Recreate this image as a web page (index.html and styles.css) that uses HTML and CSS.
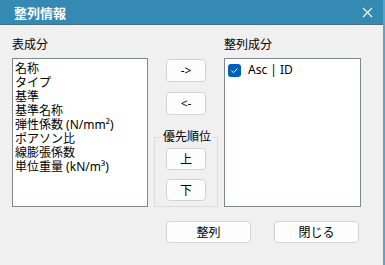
FILE: index.html
```html
<!DOCTYPE html>
<html lang="ja">
<head>
<meta charset="utf-8">
<link rel="stylesheet" href="styles.css">
</head>
<body>
<div class="window">
  <div class="titlebar">
    <span class="title">整列情報</span>
    <svg class="close" width="11" height="11" viewBox="0 0 11 11"><path d="M1 1L10 10M10 1L1 10" stroke="#fff" stroke-width="1.2" fill="none"/></svg>
  </div>
  <div class="main">
    <div class="panel left">
      <div class="label">表成分</div>
      <div class="listbox">
        <div class="item">名称</div>
        <div class="item">タイプ</div>
        <div class="item">基準</div>
        <div class="item">基準名称</div>
        <div class="item">弾性係数 (N/mm²)</div>
        <div class="item">ポアソン比</div>
        <div class="item">線膨張係数</div>
        <div class="item">単位重量 (kN/m³)</div>
      </div>
    </div>
    <div class="middle">
      <button class="btn small">-&gt;</button>
      <button class="btn small second">&lt;-</button>
      <fieldset class="group">
        <legend>優先順位</legend>
        <button class="btn small">上</button>
        <button class="btn small">下</button>
      </fieldset>
    </div>
    <div class="panel right">
      <div class="label">整列成分</div>
      <div class="listbox">
        <div class="check-item">
          <span class="checkbox"><svg width="13" height="13" viewBox="0 0 13 13"><path d="M3.5 6.8L5.5 8.6L9.5 4.6" stroke="#fff" stroke-width="1" fill="none"/></svg></span>
          <span class="check-text">Asc | ID</span>
        </div>
      </div>
    </div>
  </div>
  <div class="actions">
    <button class="btn wide">整列</button>
    <button class="btn wide">閉じる</button>
  </div>
</div>
</body>
</html>
```
FILE: styles.css
```css
html, body {
  margin: 0;
  padding: 0;
}
body {
  width: 385px;
  height: 265px;
  overflow: hidden;
  font-family: "Noto Sans", "Noto Sans CJK JP", sans-serif;
  font-size: 12px;
  color: #000;
  background: #f0f0f0;
}
.window {
  width: 383px;
  height: 265px;
  background: #f0f0f0;
  border-right: 2px solid #5aa3cc;
}
.titlebar {
  height: 24px;
  background: #348ab3;
  border-bottom: 1px solid #4f6e80;
  display: flex;
  align-items: center;
  justify-content: space-between;
  padding: 0 10px 0 14px;
}
.title {
  color: #fff;
  font-weight: bold;
  font-size: 13px;
  font-family: "Noto Sans CJK JP", sans-serif;
}
.close {
  display: block;
  margin-top: 1px;
}
.main {
  display: flex;
  gap: 6px;
  padding: 12px 0 0 12px;
}
.panel {
  display: flex;
  flex-direction: column;
}
.label {
  height: 21px;
  line-height: 16px;
  font-size: 12px;
}
.listbox {
  box-sizing: border-box;
  height: 149px;
  border: 1px solid #82868e;
  background: #fff;
  padding: 3px 2px;
}
.left .listbox { width: 136px; }
.right .listbox { width: 137px; }
.item {
  line-height: 14px;
  font-size: 12px;
  white-space: nowrap;
}
.middle {
  width: 64px;
  display: flex;
  flex-direction: column;
  align-items: center;
  padding-top: 22px;
}
.btn {
  box-sizing: border-box;
  background: #fdfdfd;
  border: 1px solid #d3d3d3;
  border-radius: 4px;
  font-family: "Noto Sans", "Noto Sans CJK JP", sans-serif;
  font-size: 12px;
  color: #000;
  padding: 0;
  margin: 0;
}
.btn.small {
  width: 40px;
  height: 23px;
}
.btn.second {
  margin-top: 10px;
}
.group {
  box-sizing: border-box;
  width: 64px;
  margin: 15px 0 0 0;
  padding: 4px 0 5px 0;
  border: 1px solid #dcdcdc;
  display: flex;
  flex-direction: column;
  align-items: center;
  gap: 9px;
}
.group legend {
  padding: 0 1px;
  margin-left: 7px;
  line-height: 14px;
  font-size: 12px;
}
.group .btn.small {
  height: 22px;
}
.check-item {
  display: flex;
  align-items: center;
  gap: 7px;
  padding: 1px 0 0 1px;
  line-height: 14px;
}
.checkbox {
  width: 13px;
  height: 13px;
  border-radius: 3px;
  background: #005fb8;
  display: block;
}
.checkbox svg { display: block; }
.check-text {
  font-size: 12px;
}
.actions {
  display: flex;
  justify-content: flex-end;
  gap: 23px;
  padding: 14px 24px 0 0;
}
.btn.wide {
  width: 85px;
  height: 22px;
}
```
